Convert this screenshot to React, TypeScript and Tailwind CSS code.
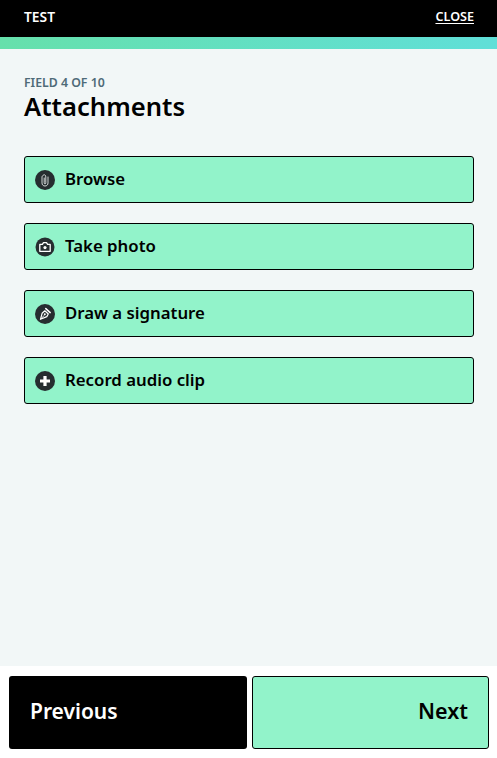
const font = "font-['Noto_Sans',sans-serif]";

const options = [
  { label: "Browse", icon: <ClipIcon /> },
  { label: "Take photo", icon: <CameraIcon /> },
  { label: "Draw a signature", icon: <PenIcon /> },
  { label: "Record audio clip", icon: <PlusIcon /> },
];

export default function App() {
  return (
    <div className={`flex h-[758px] w-[497px] flex-col bg-white ${font}`}>
      <header className="flex h-[37px] shrink-0 items-center justify-between bg-black pb-[3px] pl-6 pr-[23px] text-white">
        <span className="text-[13.8px] font-semibold leading-none">TEST</span>
        <a className="text-[12.6px] font-semibold leading-none underline underline-offset-2">CLOSE</a>
      </header>
      <div className="h-3 shrink-0 bg-gradient-to-r from-[#66e0ab] to-[#60dfd8]" />

      <main className="flex h-[617px] shrink-0 flex-col bg-[#f2f7f7] pl-6 pr-[23px] pt-[26px]">
        <p className="text-[12.3px] font-semibold leading-4 text-[#4f6b78]">FIELD 4 OF 10</p>
        <h1 className="text-[25.6px] font-semibold leading-[32px] text-black">Attachments</h1>

        <div className="mt-[33px] flex flex-col gap-5">
          {options.map((option) => (
            <button
              key={option.label}
              className="flex h-[47px] items-center gap-[10px] rounded-[3px] border border-black bg-[#92f3ca] pb-[1px] pl-[10px] text-left text-[16.8px] font-semibold text-black"
            >
              {option.icon}
              {option.label}
            </button>
          ))}
        </div>
      </main>

      <footer className="flex flex-1 gap-[5px] pb-[9px] pl-[9px] pr-[8px] pt-[10px]">
        <button className="h-[73px] w-[238px] rounded-[3px] bg-black pb-[2px] pl-[21px] text-left text-[21px] font-semibold text-white">
          Previous
        </button>
        <button className="h-[73px] flex-1 rounded-[3px] border border-black bg-[#92f3ca] pb-[2px] pr-[20px] text-right text-[21.5px] font-semibold text-black">
          Next
        </button>
      </footer>
    </div>
  );
}

function IconCircle({ children, radius = 10 }: { children: React.ReactNode; radius?: number }) {
  return (
    <svg width="20" height="20" viewBox="0 0 20 20" className="mt-[1px] shrink-0">
      <circle cx="10" cy="10" r={radius} fill="#262d30" />
      {children}
    </svg>
  );
}

function ClipIcon() {
  return (
    <IconCircle>
      <path
        d="M9.200 8v4.800c0 .7.300 1.100.8 1.100s.8-.4.8-1.100V7c0-1.400-.6-2.200-1.400-2.200S7 5.700 7 7.100v5.800c0 1.900 1.200 3.100 3 3.100s3-1.200 3-3.100V7"
        fill="none"
        stroke="#e6eaea"
        strokeWidth=".9"
        strokeLinecap="round"
      />
    </IconCircle>
  );
}

function CameraIcon() {
  return (
    <IconCircle radius={9.5}>
      <path
        d="M4.800 7.400h2.600l1.100-1.800h3l1.100 1.800h2.600v6.900H4.800z"
        fill="none"
        stroke="#fff"
        strokeWidth="1.300"
        strokeLinejoin="round"
      />
      <circle cx="10" cy="10.600" r="1.600" fill="#fff" />
    </IconCircle>
  );
}

function PenIcon() {
  return (
    <IconCircle>
      <path d="M10.800 4.600l4.400 4" stroke="#fff" strokeWidth="1.500" strokeLinecap="round" />
      <path
        d="M9.800 6.800l3.500 3.200-1.500 2.600-6.300 2.700 1.600-6z"
        fill="none"
        stroke="#fff"
        strokeWidth="1.200"
        strokeLinejoin="round"
      />
      <path d="M5.500 15.300l3.700-4" stroke="#fff" strokeWidth=".9" />
      <circle cx="9.800" cy="10.300" r="1" fill="#fff" />
    </IconCircle>
  );
}

function PlusIcon() {
  return (
    <IconCircle>
      <path d="M10 5v10M5 10h10" stroke="#fff" strokeWidth="3.200" />
    </IconCircle>
  );
}
